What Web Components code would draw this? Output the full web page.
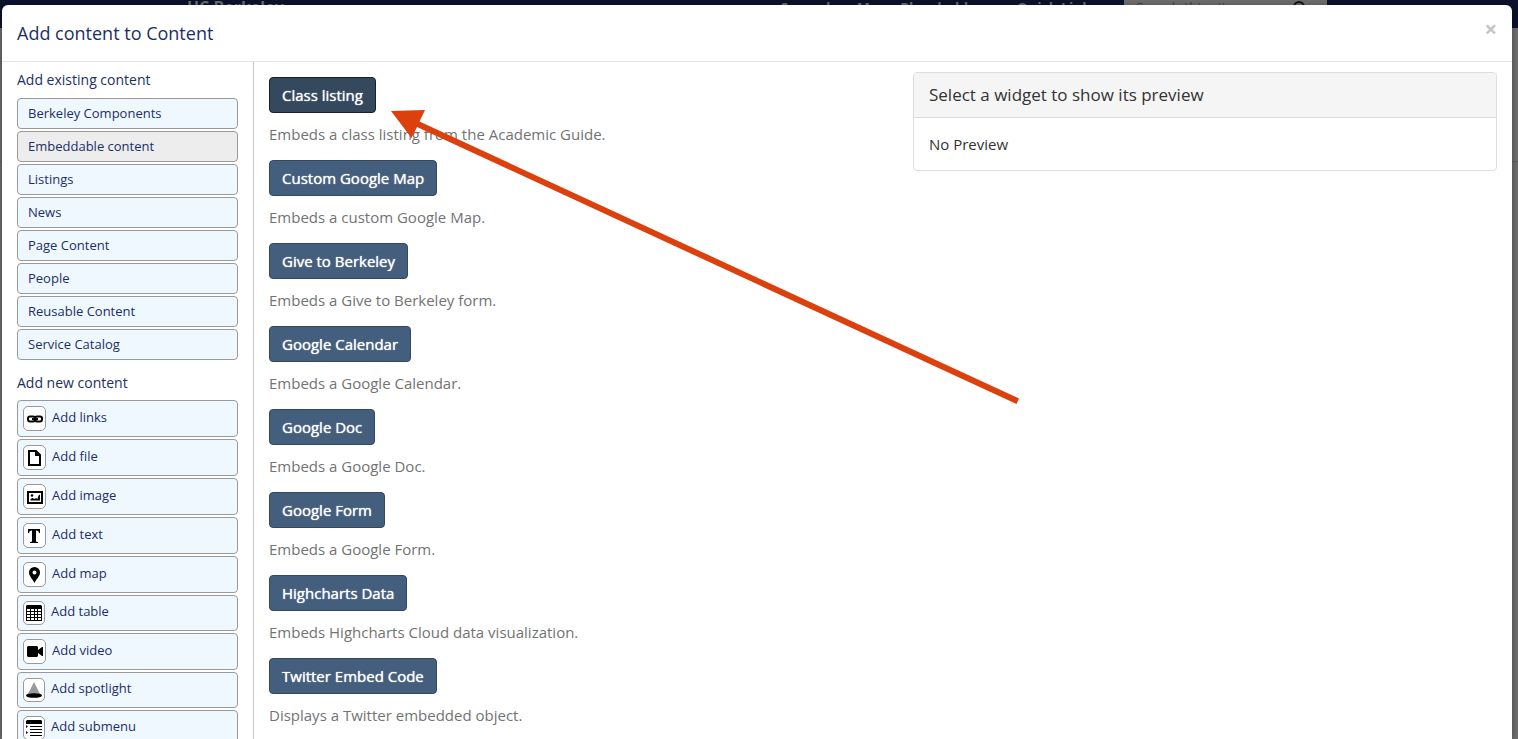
<!DOCTYPE html>
<html lang="en">
<head>
<meta charset="utf-8">
<title>Add content to Content</title>
<style>
html, body { margin: 0; height: 100%; overflow: hidden; }
body { background: #717171; color: #333; font: 15px/20px "Open Sans", sans-serif; }
</style>
</head>
<body>
<site-backdrop></site-backdrop>
<content-dialog heading="Add content to Content">
  <side-group slot="side" heading="Add existing content">
    <category-button>Berkeley Components</category-button>
    <category-button active>Embeddable content</category-button>
    <category-button>Listings</category-button>
    <category-button>News</category-button>
    <category-button>Page Content</category-button>
    <category-button>People</category-button>
    <category-button>Reusable Content</category-button>
    <category-button>Service Catalog</category-button>
  </side-group>
  <side-group slot="side" heading="Add new content" tight>
    <add-button icon="links">Add links</add-button>
    <add-button icon="file">Add file</add-button>
    <add-button icon="image">Add image</add-button>
    <add-button icon="text">Add text</add-button>
    <add-button icon="map">Add map</add-button>
    <add-button icon="table" compact>Add table</add-button>
    <add-button icon="video">Add video</add-button>
    <add-button icon="spotlight" compact>Add spotlight</add-button>
    <add-button icon="submenu" compact>Add submenu</add-button>
  </side-group>
  <widget-option name="Class listing" active>Embeds a class listing from the Academic Guide.</widget-option>
  <widget-option name="Custom Google Map">Embeds a custom Google Map.</widget-option>
  <widget-option name="Give to Berkeley">Embeds a Give to Berkeley form.</widget-option>
  <widget-option name="Google Calendar">Embeds a Google Calendar.</widget-option>
  <widget-option name="Google Doc">Embeds a Google Doc.</widget-option>
  <widget-option name="Google Form">Embeds a Google Form.</widget-option>
  <widget-option name="Highcharts Data">Embeds Highcharts Cloud data visualization.</widget-option>
  <widget-option name="Twitter Embed Code">Displays a Twitter embedded object.</widget-option>
  <preview-panel slot="preview" heading="Select a widget to show its preview">No Preview</preview-panel>
</content-dialog>
<pointer-arrow></pointer-arrow>

<script>
const define = (name, render) => customElements.define(name, class extends HTMLElement {
  constructor() { super(); this.attachShadow({ mode: "open" }); }
  connectedCallback() {
    this.shadowRoot.innerHTML = "<style>*{box-sizing:border-box}</style>" + render(this);
  }
});

const icons = {
  links: `<g fill="none" stroke="#000" stroke-width="2"><rect x="1" y="5.5" width="7" height="5" rx="2"/><rect x="8" y="5.5" width="7" height="5" rx="2"/><path d="M5 8h6"/></g>`,
  file: `<path d="M2 1h7l4 4v10H2z" fill="none" stroke="#000" stroke-width="2"/><path d="M8 1v5h5z"/>`,
  image: `<path d="M1 3h14v11H1z" fill="none" stroke="#000" stroke-width="2"/><circle cx="5" cy="6.500" r="1.300"/><path d="M3.500 11.500V10l2-1 2 1 1.500-1 1.500 1 1-3.500 1.500-1v6z"/>`,
  text: `<path d="M1 1h12v4h-1c-.3-1.800-1-2.500-3-2.500V13c0 .8.500 1 2 1v1H3v-1c1.500 0 2-.2 2-1V2.500C3 2.500 2.300 3.200 2 5H1z"/>`,
  map: `<path fill-rule="evenodd" d="M7.500 0A5.500 5.500 0 0 0 2 5.500C2 9 5 11 7.500 16 10 11 13 9 13 5.500A5.500 5.500 0 0 0 7.500 0zm0 3.500a2 2 0 1 1 0 4 2 2 0 0 1 0-4z"/>`,
  table: `<path fill-rule="evenodd" d="M1 0h14l1 1v15H0V1zM1 4v2h3V4zm4 0v2h3V4zm4 0v2h2V4zm3 0v2h3V4zM1 7v2h3V7zm4 0v2h3V7zm4 0v2h2V7zm3 0v2h3V7zM1 10v2h3v-2zm4 0v2h3v-2zm4 0v2h2v-2zm3 0v2h3v-2zM1 13v2h3v-2zm4 0v2h3v-2zm4 0v2h2v-2zm3 0v2h3v-2z"/>`,
  video: `<path d="M1 2h9l1 1v3l4-3h1v9h-1l-4-3v3l-1 1H1l-1-1V3z"/>`,
  spotlight: `<path d="M8 0l6.500 13h-13z" fill="#999"/><ellipse cx="8" cy="13.500" rx="8" ry="2.300"/>`,
  submenu: `<path d="M1 0h14l1 1v3H0V1zM4 6h12v1H4zM4 9h12v1H4zM4 12h12v1H4zM4 15h12v1H4zM0 5l2 1.500L0 8zM0 11l2 1.500L0 14z"/>`
};

define("site-backdrop", () => `
<style>
:host { position: absolute; inset: 0; display: block; overflow: hidden; color: #6d7073; }
header { height: 28px; background: #0b132d; display: flex; padding: 0 191px 0 187px; font: 700 14px/16px "Open Sans", sans-serif; }
strong { font-size: 16px; font-weight: 700; line-height: 14px; margin-right: auto; }
nav { display: flex; gap: 34px; margin-right: 26px; }
a { color: inherit; text-decoration: none; }
form { width: 203px; height: 24px; background: #6e6e6e; display: flex; padding: 0 19px 0 12px; }
input { flex: 1; min-width: 0; border: 0; padding: 0; height: 16px; background: none; font: 14px/16px "Open Sans", sans-serif; }
input::placeholder { color: #444; opacity: 1; }
svg { flex: none; }
hr { margin: 133px 0 0; border: 0; border-top: 1px solid #626262; }
</style>
<header><strong>UC Berkeley</strong>
<nav><a href="#">Secondary Menu Placeholder</a><a href="#">Quick Links</a></nav>
<form><input type="search" aria-label="Search this site" placeholder="Search this site"><svg width="16" height="18" viewBox="0 0 16 18" fill="none" stroke="#111" stroke-width="2"><circle cx="7" cy="7" r="5"/><path d="M4 11l-4 4"/></svg></form>
</header><hr>`);

define("content-dialog", el => `
<style>
:host { position: relative; display: flex; flex-direction: column; box-sizing: border-box; height: calc(100vh - 5px); margin: 5px 6px 0 2px; background: #fff; border-radius: 6px 6px 0 0; overflow: hidden; box-shadow: 0 2px 8px #0006; }
header { display: flex; flex: none; justify-content: space-between; height: 57px; padding: 15px; border-bottom: 1px solid #e5e5e5; }
h2 { margin: 0; font-size: 18px; line-height: 27px; font-weight: 400; color: #1b2f65; }
.close { align-self: flex-start; border: 0; background: none; padding: 0; color: #c4c4c4; font: 700 22px/16px "Open Sans", sans-serif; }
.body { flex: 1; min-height: 0; display: grid; grid-template-columns: 252px minmax(0, 1fr) minmax(0, 584px); padding-right: 15px; overflow: hidden; }
aside { border-right: 1px solid #ccc; padding: 8px 15px 0; display: flex; flex-direction: column; gap: 13px; }
main { padding: 15px 15px 0; }
.preview { padding-top: 10px; }
</style>
<header><h2>${el.getAttribute("heading")}</h2><button class="close" aria-label="Close">×</button></header>
<div class="body"><aside><slot name="side"></slot></aside><main><slot></slot></main><div class="preview"><slot name="preview"></slot></div></div>`);

define("side-group", el => `
<style>
:host { display: block; }
h3 { margin: 0 0 8px; font-size: 14px; line-height: 20px; font-weight: 400; color: #1b2f65; }
:host([tight]) h3 { margin-bottom: 7px; }
div { display: flex; flex-direction: column; gap: 2px; }
</style><h3>${el.getAttribute("heading")}</h3><div><slot></slot></div>`);

const sideButton = `
:host { display: block; }
button { display: flex; align-items: center; width: 100%; border: 1px solid #999; border-radius: 4px; background: #f0f8ff; color: #1b2f65; font: 13px/18px "Open Sans", sans-serif; text-align: left; }
`;

define("category-button", () => `
<style>${sideButton}
button { height: 31px; padding: 0 10px 2px; }
:host([active]) button { background: #ededed; }
</style><button><slot></slot></button>`);

define("add-button", el => `
<style>${sideButton}
button { height: 37px; padding: 0 5px; gap: 6px; }
.icon { flex: none; display: flex; align-items: center; justify-content: center; width: 23px; height: 25px; border: 1px solid #999; border-radius: 5px; background: #fff; }
.label { padding-bottom: 4px; }
:host([compact]) button { height: 36px; }
:host([compact]) .icon { width: 22px; height: 24px; }
</style><button><span class="icon"><svg width="16" height="16" viewBox="0 0 16 16" aria-hidden="true">${icons[el.getAttribute("icon")]}</svg></span><span class="label"><slot></slot></span></button>`);

define("widget-option", el => `
<style>
:host { display: block; margin-bottom: 16px; }
button { display: block; height: 36px; padding: 0 12px; border: 1px solid #34495e; border-radius: 4px; background: #445f7d; color: #fff; font: 500 15px/20px "Open Sans", sans-serif; text-shadow: 0 0 1px #fff; }
:host([active]) button { background: #34495e; border-color: #17202c; }
p { margin: 11px 0 0; color: #737373; font-size: 15px; line-height: 20px; }
</style><button>${el.getAttribute("name")}</button><p><slot></slot></p>`);

define("preview-panel", el => `
<style>
:host { display: block; border: 1px solid #ddd; border-radius: 4px; overflow: hidden; }
h3 { margin: 0; padding: 10px 15px; background: #f5f5f5; border-bottom: 1px solid #ddd; font-size: 17px; line-height: 24px; font-weight: 400; color: #333; }
p { margin: 0; padding: 16px 15px; font-size: 15px; line-height: 20px; }
</style><h3>${el.getAttribute("heading")}</h3><p><slot></slot></p>`);

define("pointer-arrow", () => `
<style>
:host { position: absolute; left: 391px; top: 109px; pointer-events: none; }
svg { display: block; }
</style>
<svg width="630" height="298" viewBox="0 0 630 298" fill="#dc400c" aria-hidden="true"><path d="M0 2L34 1 28.500 12.500 628 289.500 625.500 295 26 18 20.500 29z"/></svg>`);
</script>
</body>
</html>
